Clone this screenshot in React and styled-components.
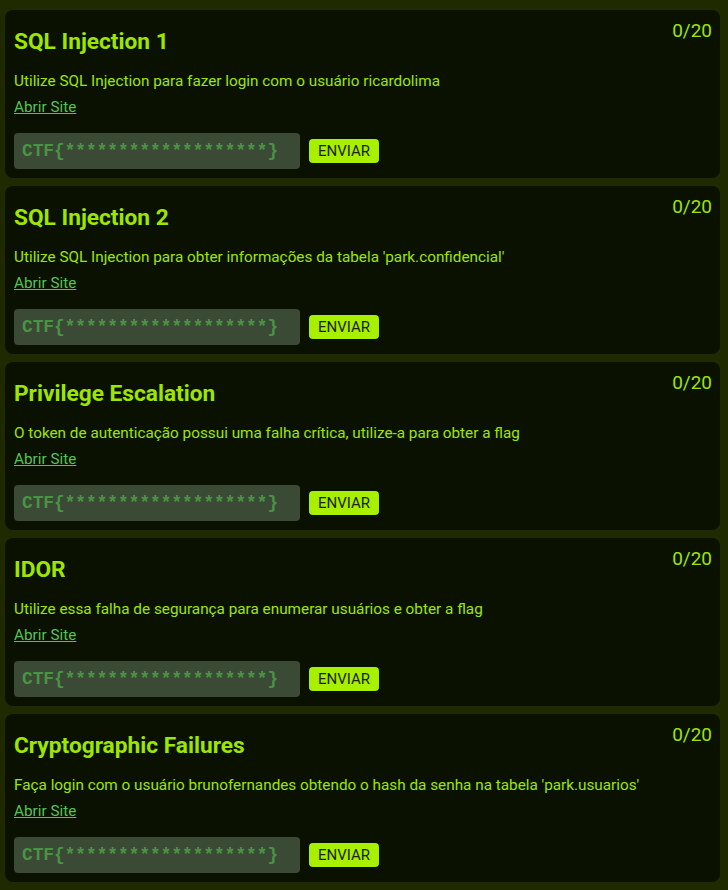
import React from 'react';
import styled, { createGlobalStyle } from 'styled-components';

const GlobalStyle = createGlobalStyle`
    body {
        margin: 0;
        background: #1f2a00;
        font-family: Roboto, 'Noto Sans', sans-serif;
    }
`;

// lista de desafios
const List = styled.div`
    display: flex;
    flex-direction: column;
    gap: 8px;
    padding: 10px 8px 8px 5px;
`;

const Card = styled.div`
    background: #0a1100;
    border-radius: 8px;
    padding: 10px 9px 9px 9px;
    display: flex;
    flex-direction: column;
`;

const Header = styled.div`
    display: flex;
    justify-content: space-between;
    align-items: flex-start;
`;

const Title = styled.h2`
    margin: 1px 0 0 0;
    font-size: 22.7px;
    line-height: 42px;
    font-weight: 700;
    color: #9de600;
`;

const Score = styled.span`
    font-size: 19px;
    line-height: 22px;
    color: #9de600;
    margin-right: -1px;
`;

const Description = styled.p`
    margin: 8px 0 0 0;
    font-size: 15.3px;
    line-height: 20px;
    color: #9de600;
`;

const Link = styled.a`
    margin-top: 6px;
    align-self: flex-start;
    font-size: 15.3px;
    line-height: 20px;
    color: #56c25a;
    text-decoration: underline;
    cursor: pointer;
`;

const Form = styled.div`
    display: flex;
    align-items: center;
    gap: 9px;
    margin-top: 16px;
`;

const FlagInput = styled.input`
    width: 286px;
    height: 36px;
    box-sizing: border-box;
    padding: 0 8px;
    border: none;
    border-radius: 4px;
    background: #3a4a35;
    font-family: 'Liberation Mono', monospace;
    font-weight: 700;
    font-size: 17.8px;
    color: #4a9346;
    outline: none;

    &::placeholder {
        color: #4a9346;
    }
`;

const SendButton = styled.button`
    height: 24px;
    padding: 0 9px;
    border: none;
    border-radius: 4px;
    background: #a6f000;
    color: #1b2300;
    font-family: Roboto, sans-serif;
    font-size: 15px;
    cursor: pointer;
`;

const challenges = [
    { title: 'SQL Injection 1', desc: 'Utilize SQL Injection para fazer login com o usuário ricardolima' },
    { title: 'SQL Injection 2', desc: "Utilize SQL Injection para obter informações da tabela 'park.confidencial'" },
    { title: 'Privilege Escalation', desc: 'O token de autenticação possui uma falha crítica, utilize-a para obter a flag' },
    { title: 'IDOR', desc: 'Utilize essa falha de segurança para enumerar usuários e obter a flag' },
    { title: 'Cryptographic Failures', desc: "Faça login com o usuário brunofernandes obtendo o hash da senha na tabela 'park.usuarios'" },
];

const Challenge = ({ title, desc }) => (
    <Card>
        <Header>
            <Title>{title}</Title>
            <Score>0/20</Score>
        </Header>
        <Description>{desc}</Description>
        <Link>Abrir Site</Link>
        <Form>
            <FlagInput placeholder="CTF{*******************}" />
            <SendButton>ENVIAR</SendButton>
        </Form>
    </Card>
);

const App = () => (
    <>
        <GlobalStyle />
        <List>
            {challenges.map((c) => (
                <Challenge key={c.title} {...c} />
            ))}
        </List>
    </>
);

export default App;
